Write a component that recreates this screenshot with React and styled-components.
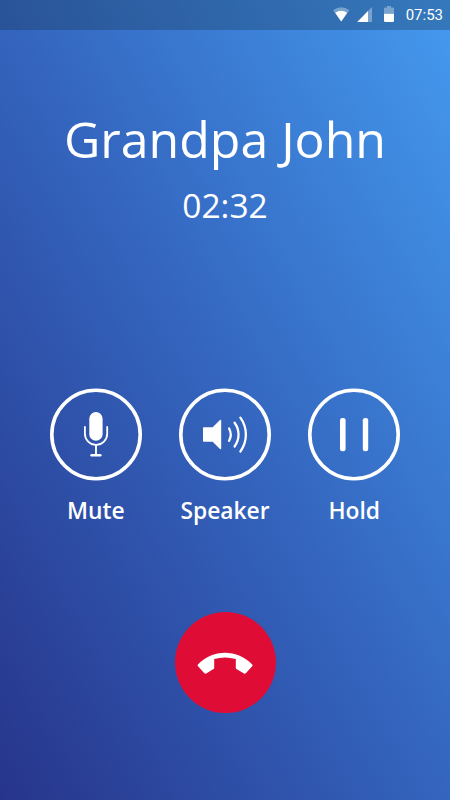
import React, { Component } from 'react';
import styled, { createGlobalStyle } from 'styled-components'

const GlobalStyle = createGlobalStyle`
    body {
        margin: 0;
        background: #27348b;
    }
`

const StyledScreen = styled.div`
    display: flex;
    flex-direction: column;
    align-items: center;
    width: 450px;
    height: 800px;
    overflow: hidden;
    background-image: linear-gradient(to top right, #27348b, #3465be 50%, #449aef);
    color: white;
    font-family: 'Open Sans', sans-serif;
`

const StyledStatusBar = styled.header`
    display: flex;
    justify-content: flex-end;
    align-items: center;
    width: 100%;
    height: 30px;
    box-sizing: border-box;
    padding-right: 7px;
    background-color: rgba(20, 48, 70, 0.3);
`

const StyledClock = styled.span`
    margin-left: 10px;
    font-family: Roboto, sans-serif;
    font-size: 15px;
    line-height: 30px;
`

const StyledCaller = styled.div`
    display: flex;
    flex-direction: column;
    align-items: center;
    height: 358px;
    padding-top: 75px;
    box-sizing: border-box;
`

const StyledName = styled.h1`
    margin: 0;
    font-size: 50px;
    font-weight: 400;
    line-height: 68px;
    white-space: nowrap;
`

const StyledTimer = styled.div`
    margin-top: 9px;
    font-size: 33.5px;
    line-height: 46px;
`

const StyledActions = styled.div`
    display: grid;
    grid-template-columns: repeat(3, 129.2px);
    justify-items: center;
`

const StyledAction = styled.div`
    display: flex;
    flex-direction: column;
    align-items: center;
`

const StyledButton = styled.button`
    display: flex;
    justify-content: center;
    align-items: center;
    flex: none;
    width: ${props => props.$size}px;
    height: ${props => props.$size}px;
    padding: 0;
    border: none;
    border-radius: 50%;
    background-color: ${props => props.$filled ? '#df0d35' : 'transparent'};
    color: white;
`

const StyledIcon = styled.svg`
    flex: none;
    width: 94px;
    height: 94px;
`

const StyledLabel = styled.span`
    margin-top: 15px;
    font-size: 22.8px;
    font-weight: 600;
    line-height: 32px;
`

const StyledHangUp = styled.div`
    margin-top: 85px;
`

const StatusIcons = () => (
  <svg width="64" height="30" viewBox="332 0 64 30" fill="white">
    <path d="M333 10.3 Q341.2 4.2 349.4 10.3 L341.2 21.6 Z" opacity="0.35" />
    <path d="M335.2 12.8 Q341.2 8.6 347.2 12.8 L341.2 21.6 Z" />
    <path d="M372 7 V22 H357.3 Z" opacity="0.35" />
    <path d="M368 11.1 V22 H357.3 Z" />
    <path d="M384.8 7.5 H387 V6 H391 V7.5 H393.2 Q394 7.5 394 8.3 V13.7 H384 V8.3 Q384 7.5 384.8 7.5 Z" opacity="0.35" />
    <path d="M384 13.7 H394 V20.8 Q394 22 392.8 22 H385.2 Q384 22 384 20.8 Z" />
  </svg>
)

const Ring = () => <circle r="44.2" fill="none" stroke="white" strokeWidth="3.6" />

const MicIcon = () => (
  <StyledIcon viewBox="-47 -47.5 94 94" fill="none" stroke="white" strokeLinecap="round">
    <Ring />
    <rect x="-6.7" y="-22.5" width="13.3" height="28.8" rx="6.65" fill="white" stroke="none" />
    <path d="M-11.1 -7.5 V-0.8 A11.1 11.1 0 0 0 11.2 -0.8 V-7.5" strokeWidth="1.8" />
    <path d="M0 10.5 V20.5" strokeWidth="1.9" />
    <path d="M-4.4 20.7 H4.3" strokeWidth="2.6" />
  </StyledIcon>
)

const SpeakerIcon = () => (
  <StyledIcon viewBox="-47 -47.5 94 94" fill="none" stroke="white" strokeWidth="2.3" strokeLinecap="round">
    <Ring />
    <path d="M-21.3 -7.2 H-12.3 L-5.3 -14.2 Q-3.8 -15.4 -3.8 -13.7 V13.7 Q-3.8 15.4 -5.3 14.2 L-12.3 7.2 H-21.3 Q-22 7.2 -22 6.5 V-6.5 Q-22 -7.2 -21.3 -7.2 Z" fill="white" stroke="none" />
    <path d="M4.1 -6 A13 13 0 0 1 4.1 6.3" />
    <path d="M9.6 -11.8 A20 20 0 0 1 9.6 12" />
    <path d="M15.4 -16.8 A28.8 28.8 0 0 1 15.4 17" />
  </StyledIcon>
)

const HoldIcon = () => (
  <StyledIcon viewBox="-47 -47.5 94 94" fill="white">
    <Ring />
    <rect x="-14" y="-16.6" width="5.6" height="33.4" rx="2.4" />
    <rect x="8.8" y="-16.6" width="5.4" height="33.4" rx="2.4" />
  </StyledIcon>
)

const HangUpIcon = () => (
  <StyledIcon viewBox="-47 -47 94 94" fill="white">
    <path d="M-27 1.5 C-13 -14.3 13 -14.3 27.2 1.5 Q28.2 2.4 27.2 3.3 L20.8 10.2 Q20 11 19 10.4 L11.4 6 Q10.8 5.6 10.8 4.8 V-4 Q0 -7.2 -10.8 -4 V4.8 Q-10.8 5.6 -11.4 6 L-18.8 10.4 Q-19.8 11 -20.6 10.2 L-27 3.3 Q-27.9 2.4 -27 1.5 Z" />
  </StyledIcon>
)

class CallScreen extends Component {
  state = {
    name: 'Grandpa John',
    duration: '02:32',
    actions: [
      { label: 'Mute', Icon: MicIcon },
      { label: 'Speaker', Icon: SpeakerIcon },
      { label: 'Hold', Icon: HoldIcon }
    ]
  }

  render() {

  //Each action becomes a round button with its label underneath

    const actionsList = this.state.actions.map(({ label, Icon }) => {
      return (
        <StyledAction key={label}>
          <StyledButton $size={92} aria-label={label}><Icon /></StyledButton>
          <StyledLabel>{label}</StyledLabel>
        </StyledAction>
      )
    })
    return (
      <StyledScreen>
        <GlobalStyle />
        <StyledStatusBar>
          <StatusIcons />
          <StyledClock>07:53</StyledClock>
        </StyledStatusBar>
        <StyledCaller>
          <StyledName>{this.state.name}</StyledName>
          <StyledTimer>{this.state.duration}</StyledTimer>
        </StyledCaller>
        <StyledActions>{actionsList}</StyledActions>
        <StyledHangUp>
          <StyledButton $size={101} $filled aria-label="End call"><HangUpIcon /></StyledButton>
        </StyledHangUp>
      </StyledScreen>
    )
  }
}

export default CallScreen;
